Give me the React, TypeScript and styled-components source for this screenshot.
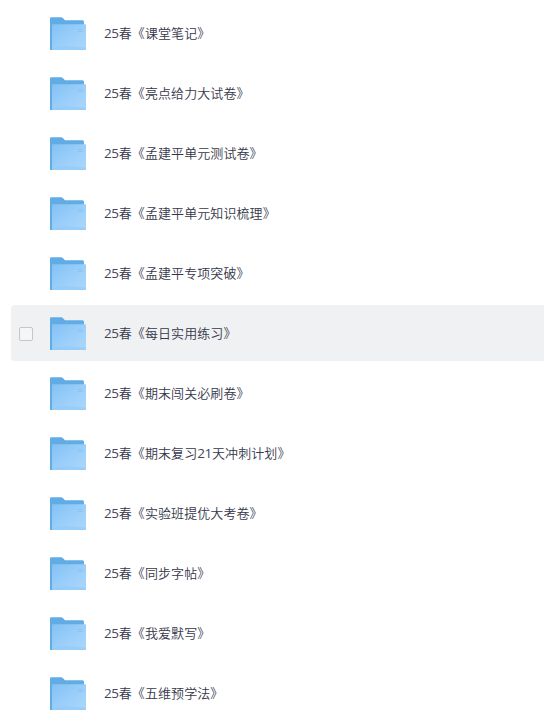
import React from "react";
import styled, { createGlobalStyle } from "styled-components";

const GlobalStyle = createGlobalStyle`
  * { box-sizing: border-box; }
  html, body { margin: 0; background: #fff; overflow: hidden; }
`;

const FileList = styled.ul`
  list-style: none;
  margin: 0;
  padding: 5px 0 0 11px;
  width: 544px;
  height: 717px;
  overflow: hidden;
  display: flex;
  flex-direction: column;
  gap: 4px;
`;

const Row = styled.li<{ $active: boolean }>`
  flex: none;
  display: flex;
  align-items: center;
  height: 56px;
  padding-left: 8px;
  border-radius: 4px 0 0 4px;
  background: ${(p) => (p.$active ? "#eff1f3" : "transparent")};
`;

const Checkbox = styled.span<{ $visible: boolean }>`
  width: 14px;
  height: 14px;
  margin: 2px 17px 0 0;
  border: 1px solid #c3c5ca;
  border-radius: 2px;
  background: #f5f6f7;
  visibility: ${(p) => (p.$visible ? "visible" : "hidden")};
`;

const FolderSvg = styled.svg`
  display: block;
  flex: none;
  width: 36px;
  height: 34px;
  margin: 2px 18px 0 0;
`;

const Name = styled.span`
  font: 350 13px/20px "Noto Sans CJK SC", sans-serif;
  letter-spacing: 0.08px;
  color: #36374a;
  white-space: nowrap;
`;

const Digits = styled.span`
  font-family: "Open Sans", "Noto Sans", sans-serif;
  font-size: 13.5px;
  font-weight: 400;
  letter-spacing: -0.35px;
  color: #45465a;
`;

const FolderIcon = () => (
  <FolderSvg viewBox="0 0 36 34">
    <defs>
      <linearGradient id="front" x1="0" y1="0" x2="1" y2="1">
        <stop offset="0" stopColor="#83c1f4" />
        <stop offset="0.5" stopColor="#99cef9" />
        <stop offset="1" stopColor="#acd7fc" />
      </linearGradient>
    </defs>
    <path d="M0 1.5Q0 .3 1.2 .3H11.2Q12.1 .3 12.8 1L14.5 2.8Q15 3.3 15.8 3.3H32.5Q34 3.3 34 4.8V33H0Z" fill="#62ace6" />
    <path d="M2 8Q2 7.2 2.8 7.2H35.2Q36 7.2 36 8V32.2Q36 33 35.2 33H2Z" fill="url(#front)" />
    <path d="M2 30.5L18 29.5L36 30.5V32.2Q36 33 35.2 33H2Z" fill="#91cbf8" opacity=".7" />
    <path d="M28 12.5H32.5M28 14.5H32.5" stroke="#7bbaf0" strokeWidth=".6" />
  </FolderSvg>
);

const folders = [
  "25春《课堂笔记》",
  "25春《亮点给力大试卷》",
  "25春《孟建平单元测试卷》",
  "25春《孟建平单元知识梳理》",
  "25春《孟建平专项突破》",
  "25春《每日实用练习》",
  "25春《期末闯关必刷卷》",
  "25春《期末复习21天冲刺计划》",
  "25春《实验班提优大考卷》",
  "25春《同步字帖》",
  "25春《我爱默写》",
  "25春《五维预学法》",
];
const hovered = 5;

const FolderName = ({ text }: { text: string }) => (
  <Name>
    {text.split(/(\d+)/).map((part, i) =>
      /^\d+$/.test(part) ? <Digits key={i}>{part}</Digits> : part
    )}
  </Name>
);

export default function App() {
  return (
    <>
      <GlobalStyle />
      <FileList>
        {folders.map((name, i) => (
          <Row key={name} $active={i === hovered}>
            <Checkbox $visible={i === hovered} />
            <FolderIcon />
            <FolderName text={name} />
          </Row>
        ))}
      </FileList>
    </>
  );
}
